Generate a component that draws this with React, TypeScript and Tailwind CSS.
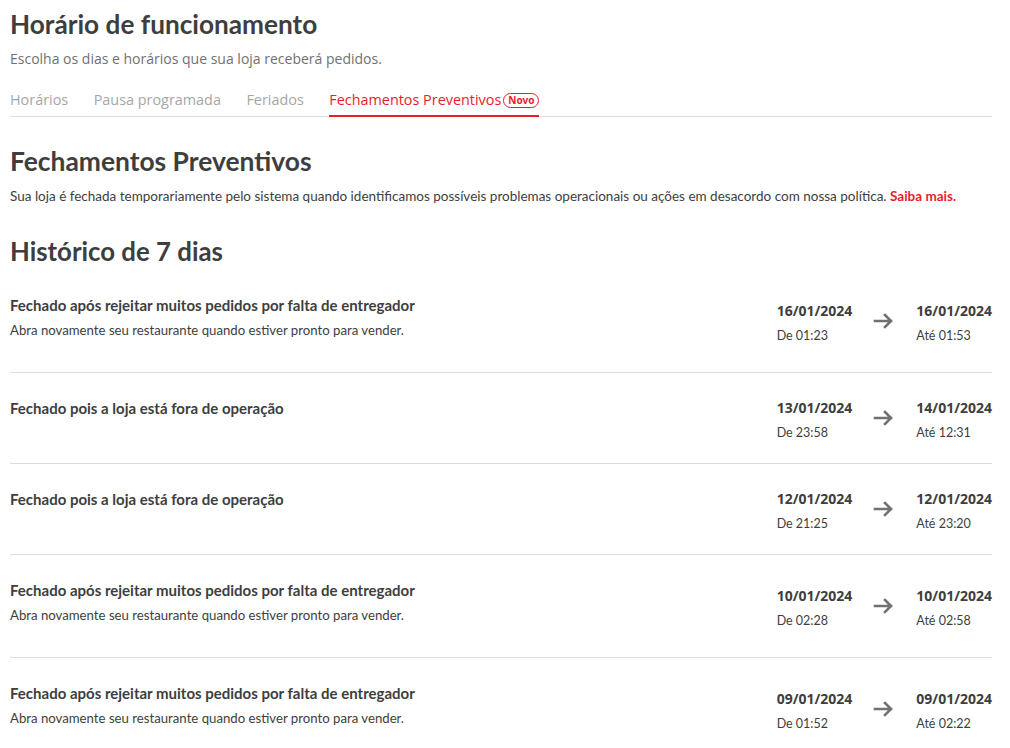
import React from 'react';

type Closure = {
  title: string;
  hint?: string;
  fromDate: string;
  fromTime: string;
  toDate: string;
  toTime: string;
};

const HINT = 'Abra novamente seu restaurante quando estiver pronto para vender.';

const closures: Closure[] = [
  {
    title: 'Fechado após rejeitar muitos pedidos por falta de entregador',
    hint: HINT,
    fromDate: '16/01/2024',
    fromTime: '01:23',
    toDate: '16/01/2024',
    toTime: '01:53',
  },
  {
    title: 'Fechado pois a loja está fora de operação',
    fromDate: '13/01/2024',
    fromTime: '23:58',
    toDate: '14/01/2024',
    toTime: '12:31',
  },
  {
    title: 'Fechado pois a loja está fora de operação',
    fromDate: '12/01/2024',
    fromTime: '21:25',
    toDate: '12/01/2024',
    toTime: '23:20',
  },
  {
    title: 'Fechado após rejeitar muitos pedidos por falta de entregador',
    hint: HINT,
    fromDate: '10/01/2024',
    fromTime: '02:28',
    toDate: '10/01/2024',
    toTime: '02:58',
  },
  {
    title: 'Fechado após rejeitar muitos pedidos por falta de entregador',
    hint: HINT,
    fromDate: '09/01/2024',
    fromTime: '01:52',
    toDate: '09/01/2024',
    toTime: '02:22',
  },
];

const tabs = ['Horários', 'Pausa programada', 'Feriados'];

function ArrowRight() {
  return (
    <svg width="24" height="24" viewBox="0 0 24 24" fill="none" className="shrink-0">
      <path
        d="M3 12h16M13 6l6 6-6 6"
        stroke="#717171"
        strokeWidth="2.6"
        strokeLinecap="square"
      />
    </svg>
  );
}

function DateBlock({ date, label }: { date: string; label: string }) {
  return (
    <div className="flex flex-col">
      <span className="text-[14px] leading-6 font-bold text-[#3e3e3e] font-['Noto_Sans',sans-serif]">
        {date}
      </span>
      <span className="mt-[6px] text-[12.5px] leading-[14px] text-[#3e3e3e] font-['Lato',sans-serif]">
        {label}
      </span>
    </div>
  );
}

function ClosureRow({ item, last }: { item: Closure; last: boolean }) {
  return (
    <div
      className={`flex items-center justify-between py-[23px] ${
        last ? '' : 'border-b border-[#dcdcdc]'
      }`}
    >
      <div className={`flex flex-col ${item.hint ? 'pb-[9px]' : 'pb-[20px]'}`}>
        <span className="text-[15px] leading-6 font-bold text-[#3e3e3e] font-['Lato',sans-serif]">
          {item.title}
        </span>
        {item.hint && (
          <span className="mt-[3px] text-[13.2px] leading-5 text-[#3e3e3e] font-['Lato',sans-serif]">
            {item.hint}
          </span>
        )}
      </div>
      <div className="flex items-center gap-5">
        <DateBlock date={item.fromDate} label={`De ${item.fromTime}`} />
        <ArrowRight />
        <DateBlock date={item.toDate} label={`Até ${item.toTime}`} />
      </div>
    </div>
  );
}

export default function App() {
  return (
    <div className="min-h-screen bg-white font-['Open_Sans',sans-serif] text-[#3e3e3e]">
      <div className="w-[982px] ml-[10px] pt-[6px]">
        {/* Header */}
        <h1 className="text-[26.2px] leading-9 font-bold text-[#3e3e3e] font-['Lato',sans-serif]">
          Horário de funcionamento
        </h1>
        <p className="mt-[7px] text-[14px] leading-5 text-[#717171]">
          Escolha os dias e horários que sua loja receberá pedidos.
        </p>

        {/* Tabs */}
        <div className="mt-[19px] flex items-end gap-[25.5px] border-b border-[#dcdcdc]">
          {tabs.map((t) => (
            <span key={t} className="pb-[4px] text-[14.4px] leading-6 text-[#a6a6a6]">
              {t}
            </span>
          ))}
          <span className="-mb-px flex items-center gap-[2px] border-b-2 border-[#ea1d2c] pb-[3px]">
            <span className="text-[14.4px] leading-6 text-[#ea1d2c]">Fechamentos Preventivos</span>
            <span className="rounded-full border-[1.5px] border-[#ea1d2c] px-[4px] text-[10px] leading-[13px] font-bold text-[#ea1d2c] font-['Noto_Sans',sans-serif]">
              Novo
            </span>
          </span>
        </div>

        {/* Preventive closures */}
        <h2 className="mt-[28px] text-[26.4px] leading-8 font-bold text-[#3e3e3e] font-['Lato',sans-serif]">
          Fechamentos Preventivos
        </h2>
        <p className="mt-[9px] text-[13.5px] leading-5 text-[#3e3e3e] font-['Lato',sans-serif]">
          Sua loja é fechada temporariamente pelo sistema quando identificamos possíveis problemas
          operacionais ou ações em desacordo com nossa política.{' '}
          <span className="font-bold text-[#ea1d2c]">Saiba mais.</span>
        </p>

        <h2 className="mt-[29px] text-[25.8px] leading-8 font-bold text-[#3e3e3e] font-['Lato',sans-serif]">
          Histórico de 7 dias
        </h2>

        <div className="mt-[3px]">
          {closures.map((c, i) => (
            <ClosureRow key={i} item={c} last={i === closures.length - 1} />
          ))}
        </div>
      </div>
    </div>
  );
}
